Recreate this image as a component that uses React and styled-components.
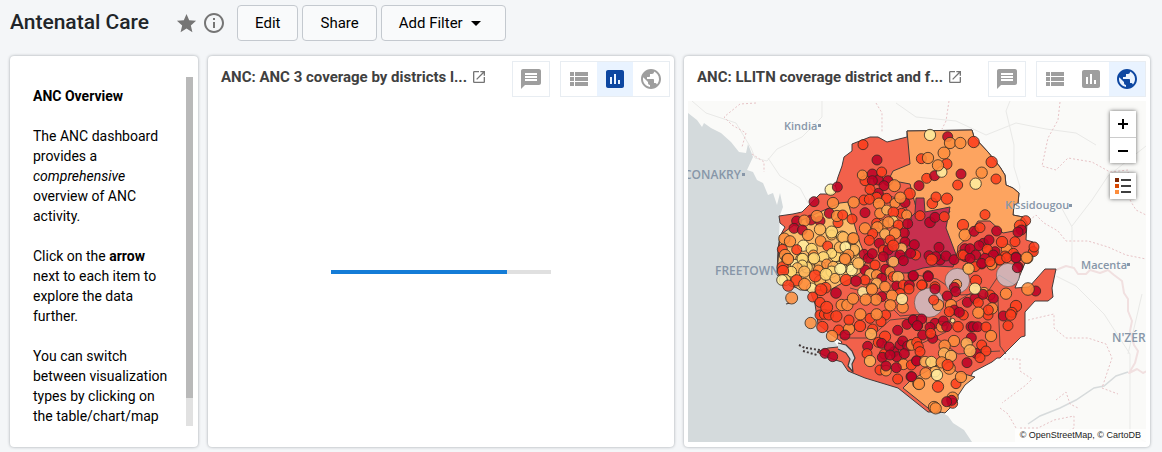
import React from "react";
import styled, { createGlobalStyle } from "styled-components";
import {
  MdStar,
  MdInfoOutline,
  MdMessage,
  MdViewList,
  MdAssessment,
  MdPublic,
  MdLaunch,
} from "react-icons/md";

const GlobalStyle = createGlobalStyle`
  * { box-sizing: border-box; }
  body {
    margin: 0;
    background: #f4f6f8;
    color: #000;
    font: 14px/20px Roboto, "Liberation Sans", sans-serif;
  }
  button { font: inherit; color: inherit; cursor: pointer; }
`;

const Page = styled.div`
  padding: 5px 12px 5px 10px;
`;

const Toolbar = styled.header`
  display: flex;
  align-items: center;
  gap: 4px;
  margin-bottom: 15px;
`;

const PageTitle = styled.h1`
  margin: 0 21px 2px 0;
  font-size: 21px;
  line-height: 24px;
  font-weight: 500;
  color: #212529;
`;

const IconButton = styled.button`
  display: flex;
  align-items: center;
  justify-content: center;
  width: 24px;
  height: 24px;
  padding: 0;
  border: 0;
  background: none;
  color: #757575;
`;

const Actions = styled.div`
  display: flex;
  gap: 4px;
  margin-left: 7px;
`;

const ActionButton = styled.button`
  display: flex;
  align-items: center;
  gap: 8px;
  height: 36px;
  padding: 0 ${(p) => (p.$menu ? 24 : 17)}px 0 17px;
  border: 1px solid #c4c9cf;
  border-radius: 4px;
  background: #f9fafb;
  font-size: 15px;
`;

const Dashboard = styled.main`
  display: grid;
  grid-template-columns: 188fr 466fr 466fr;
  gap: 10px;
`;

const Card = styled.section`
  display: flex;
  flex-direction: column;
  min-width: 0;
  padding: 4px;
  border-radius: 4px;
  background: #fff;
  box-shadow: 0 0 3px rgba(40, 50, 60, 0.42);
`;

const TextCard = styled(Card)`
  flex-direction: row;
  align-items: stretch;
  padding: 21px 5px 21px 23px;
`;

const TextBody = styled.div`
  flex: 1;
  min-width: 0;
  padding: 9px 12px 0 0;

  p { margin: 0 0 20px; }
  p:last-child { margin: 0; }
`;

const ScrollTrack = styled.div`
  flex: none;
  width: 7px;
  background: #e1e1e1;
`;

const ScrollThumb = styled.div`
  height: 92%;
  background: #b9b9b9;
`;

const CardHeader = styled.header`
  display: flex;
  align-items: flex-start;
  gap: 10px;
  padding: 1px 0 0 9px;
  height: 41px;
`;

const CardTitle = styled.h2`
  flex: 1;
  display: flex;
  align-items: center;
  gap: 4px;
  min-width: 0;
  margin: 6px 0 0;
  font-size: 15px;
  line-height: 20px;
  font-weight: 700;
  color: #404040;
  white-space: nowrap;

  svg { flex: none; color: #757575; }
`;

const IconGroup = styled.div`
  display: flex;
  border: 1px solid #e8edf2;
`;

const ViewButton = styled.button`
  display: flex;
  align-items: center;
  justify-content: center;
  width: 36px;
  height: 34px;
  padding: 0;
  border: 0;
  background: ${(p) => (p.$active ? "#e9f3ff" : "#fff")};
  color: ${(p) => (p.$active ? "#0d47a1" : "#9e9e9e")};
`;

const Loading = styled.div`
  flex: 1;
  display: flex;
  align-items: center;
  justify-content: center;
`;

const ProgressTrack = styled.div`
  width: 220px;
  height: 4px;
  background: #e0e0e0;
`;

const ProgressFill = styled.div`
  height: 100%;
  background: #147cd7;
`;

const MapFrame = styled.div`
  position: relative;
`;

const MapDrawing = styled.svg`
  display: block;
  width: 100%;
  height: auto;
`;

const MapControls = styled.div`
  position: absolute;
  top: 10px;
  right: 10px;
  display: flex;
  flex-direction: column;
  gap: 10px;
`;

const ControlBox = styled.div`
  background: #fff;
  box-shadow: 0 0 4px rgba(0, 0, 0, 0.6);
`;

const ControlButton = styled.button`
  display: flex;
  align-items: center;
  justify-content: center;
  width: 26px;
  height: 26px;
  padding: 0;
  border: 0;
  background: #fff;

  & + & { border-top: 1px solid #ccc; }
`;

const Attribution = styled.div`
  position: absolute;
  right: 0;
  bottom: 0;
  padding: 0 5px;
  background: rgba(255, 255, 255, 0.75);
  font: 9px/13px "Liberation Sans", sans-serif;
  color: #222;
`;

const PlaceName = styled.text`
  font: 600 ${(p) => (p.$city ? 12 : 11)}px "Open Sans", "Noto Sans", sans-serif;
  fill: #8796a8;
`;

const fills = {
  d: "#bd0026",
  r: "#fb3d1c",
  o: "#fd8d3c",
  l: "#fdb35a",
  y: "#fed976",
  p: "#ffeda0",
  g: "#c9c5cd",
};

/* Facilities grouped by map tile. Each entry: x, y, class and radius in
   thirds of a map unit, measured from the tile's corner. */
const tiles = [
  {
    x: 770,
    y: 120,
    points:
      "279,74,r 321,120,d 182,209,p,17 202,201,d 132,245,d 189,249,o,17 80,303,d 123,300,d 103,302,o,17 178,280,d 150,303,d 204,308,r 141,289,o,18 201,288,o,17 72,325,d 97,330,d 43,356,o,17 60,364,o,17 114,345,o,17 150,328,l,17 185,345,l 185,336,y,18 216,350,y,17 37,388,r 100,377,p,17 80,389,r 125,387,y,17 152,363,o,16 173,378,r 130,405,o 197,408,y,17 185,400,y 226,380,p,17 45,405,o,17 53,418,o,18 95,418,y,18 128,418,l,17 160,412,y,17 225,418,o,17 250,395,l,17 248,356,o,17 38,442,r,17 75,432,p,14 110,442,y,17 150,440,l,17 170,432,o 208,442,p,17 235,440,y,16 190,440,l,16",
  },
  {
    x: 840,
    y: 160,
    points:
      "75,62,r 67,45,o 97,42,d 115,60,d 125,36,r 97,62,d 144,62,d 163,77,o,18 132,77,d 115,100,d 90,88,r 110,112,r 72,120,r 88,118,r 140,115,r 165,130,o 117,131,o,17 195,128,d 209,101,r,17 181,113,o,17 75,158,d 41,127,o,17 8,165,r 36,177,r 120,160,o,16 140,150,l 185,160,r 200,165,o 160,157,r,16 110,190,r 75,205,o,17 130,195,o,16 160,183,y 145,187,o,17 175,195,r 112,202,o,17 203,191,d 98,221,r 135,222,l,16 193,219,d 165,220,o,17 88,241,r 150,240,r 118,250,d 195,246,d 185,265,l,16 223,254,d 130,270,r 145,270,d 160,257,r,17 72,283,d 85,295,d 97,281,d 227,285,r 180,285,d 212,280,d 130,290,d 160,305,l,16 190,302,d 75,330,d 105,315,r 137,328,d 90,342,l,16 110,345,o,16 150,335,o 125,355,d 160,350,r 174,352,l,18 18,360,r,17 75,360,r 48,363,d,16 110,370,l,16 95,385,o,16 135,380,o,16 170,378,d 190,375,r 208,375,d 219,349,d 264,347,d 247,375,r 285,380,r 240,167,r 270,187,d,16 285,172,d 313,170,r 277,130,r,16 288,111,r 321,116,r,17 237,77,d 260,55,r 284,47,d 320,12,r,16 305,36,p,16 294,16,o,17 363,42,d 353,75,r 297,262,d 267,287,d 300,300,d 287,290,d 318,288,d 275,299,r,17 342,299,d 369,195,r,17 375,225,o,18 375,266,d 365,285,r 376,290,d 385,325,o,16 0,262,l,17 10,232,l,17 40,235,o,17 42,270,l,17 16,261,p,16 25,285,o,17 17,300,o,17 35,330,p,17 5,325,p,16 55,310,l,17",
  },
  {
    x: 900,
    y: 120,
    points:
      "90,45,p,17 143,50,d 150,69,o,17 181,69,o,17 221,66,r,17 275,126,r,17 132,99,o,18 64,116,r 84,114,o,17 245,158,o,17 288,177,r 227,191,p,17 255,284,r 222,334,d 240,323,r 290,333,d 345,365,r 320,388,o,16 306,366,r,17 377,302,r 360,317,r,17 364,330,d 354,336,d 400,395,r 402,381,r 340,400,r 348,412,d,16 382,414,o,17 354,440,d 250,370,d 267,360,d 237,377,d 285,395,d 262,388,r 190,405,r 210,386,d 227,405,d 280,405,d 255,415,d 315,408,r 300,420,r 245,432,d 276,432,r,16 225,440,r",
  },
  {
    x: 770,
    y: 255,
    points:
      "54,12,o,17 98,12,y,17 132,10,y,17 225,12,o,17 97,30,y 82,38,l 64,50,y,16 39,48,r,17 45,75,y,17 36,75,p,16 80,76,r,17 55,92,r,17 125,99,p 103,50,l,17 150,78,l,17 104,88,o,18 145,45,o 185,50,y,17 136,63,r,18 168,58,y,18 195,70,l,15 211,42,p,17 65,129,o,18 128,126,r 167,98,r,16 153,104,r,18 198,114,d,16 150,142,r 150,180,r 163,178,r 176,180,r 170,157,r,18 199,184,r,17 122,204,o,17 157,216,r,17 206,225,r 186,243,o,17 237,222,o,17 225,240,d 237,195,r 215,150,o,17 232,150,o,17 249,131,o,17 278,110,p 335,125,d 318,134,o,17 306,103,o,17 287,134,o,17 390,115,r 417,102,r 366,122,o,17 361,151,o,17 398,157,o,17 396,132,p,17 300,190,r 347,180,r 333,200,r 271,178,o,17 320,178,o,17 308,222,r 270,213,r,17 303,237,l,17 345,245,r,17 383,226,d 411,208,d 430,195,d 443,212,d 293,274,d 291,296,r 300,318,l,17 325,262,r 335,265,d 343,297,r 337,307,d 372,290,d 390,270,d 398,258,d 358,276,d 380,305,d 425,268,o 413,273,d 403,296,d 360,300,d 330,345,r 348,347,o,16 348,333,d 400,328,o,16 379,338,d 383,372,r 424,330,r 440,317,d 423,365,d 445,385,o,17 165,295,d 188,305,d",
  },
  {
    x: 910,
    y: 255,
    points:
      "180,10,d 215,25,d 245,30,o 240,20,r 270,15,r 290,8,r 318,8,d 350,8,o,17 142,77,g,37 294,60,g,35 57,143,g,44 322,38,d 176,41,l,17 198,77,r,17 55,65,d 35,90,r 10,62,d 75,102,d 140,88,o 133,97,d 137,110,d 112,123,d 84,150,o,17 71,135,r 123,150,o,17 133,165,d 118,170,r 160,180,r 148,172,d 172,142,d 195,130,d 205,143,r 222,112,l 240,120,r 250,130,d 219,118,d 195,101,p,17 288,116,o,17 377,108,d 354,102,o,19 234,180,r 246,160,o,17 235,165,r 205,173,o,17 280,183,d 318,153,r,17 306,172,r 302,180,r,16 294,212,r 10,195,d 35,192,d 22,212,d 75,205,d 95,215,o,16 100,198,d 60,217,d 68,250,d 38,240,d 62,235,r 110,215,d 128,197,p,7 144,215,r,16 183,215,d 190,215,d 203,215,d 228,216,r 184,248,d 243,243,o,17 5,270,o,16 20,262,r 25,275,r 30,290,r 132,258,o,17 170,265,l,17 104,272,o,17 215,270,r 228,288,r 198,295,d 180,287,l,18 210,308,r 171,323,d 102,295,l,17 123,303,l,17 20,318,d 45,320,l,16 64,321,y,17 95,322,o,17 118,340,o,18 113,330,r,17 75,350,l,16 47,355,o,17 81,360,p,17 5,365,d 27,387,o,17 84,395,r,17 138,386,r 153,366,o,17 128,428,o,17 128,445,r 125,436,d 110,440,d 72,456,o,17 77,460,o,17",
  },
];

const parse = (points) =>
  points.split(" ").map((entry) => {
    const [x, y, kind, r] = entry.split(",");
    return { x: +x, y: +y, kind, r: r ? +r : 15 };
  });

function FacilityMap() {
  return (
    <MapDrawing viewBox="688 101 458 341" role="img" aria-label="LLITN coverage by district and facility">
      <rect x="688" y="101" width="458" height="341" fill="#fafaf8" />
      <path
        d="M688 113l9 7 5 7 2-4 7 5 10 5 10 9 8 10 7 1 2-9 2 5 3 8-6 13 6 2 4 8 6 3 5 12 5-2 4 12 3-12 3 14-3 8L779 237 820 280 825 330 853 365 905 388 935 409 948 416 953 423 964 430 972 442 688 442z"
        fill="#d4dadc"
      />
      <g fill="none" stroke="#e9e9e7">
        <path d="M692 101l14 12 30 10 15 25 4 10 12 3 10-12 25-12 20-20 0-16M768 158l12 18 20 12 8 15M896 103l20 14 40 4 30 14 30-12 30 6 30 4 20 12" />
        <path d="M1010 101l-4 10 8 34 0 22 6 20-4 18M1060 205l12 22 0 40M1072 226l20-26 16-24 38-30M1056 276l20 10 28 28 26 40 0 80 16 8M1128 354l14-60" />
      </g>
      <path
        d="M1028 424l12-8 20-8 16-8 18-12 10-2 12-10 12-4"
        fill="none"
        stroke="#d7dbdc"
        strokeWidth="1.5"
      />
      <g fill="none" stroke="#f1e0e0" strokeWidth="2" strokeLinejoin="round">
        <path d="M1056 270l10-4 8 2 4 6 8 0 4-4 10 3 8-3 6 5 8 6 2 12 4 6 0 12 4 10-2 10 4 14 4 6-3 12-6 10 8-4 6 4 4-2" />
      </g>
      <g fill="none" stroke="#e7c3c6" strokeDasharray="2 2">
        <path d="M756 103l-16 1-16 13 8 8 14 8-4 14M752 154l12 8 0 10M876 103l6 10 0 20M949 101l-3 20-4 8M1060 102l-2 18-10 18-6 28 14 4 12-12 24 4 18 10 18-2 2 30 6 10 20 10" />
        <path d="M1016 217l10 6 10-8 8 8 14 8 8 10 22 0 20 6 18 8 20 4M1028 320l26-6 0 14 12 10 22 0 18 6 6 14-10 30 16 6M1004 359l16 0 0 12 12 8-6 6-24 18M1000 408l8 6 8 14M1056 400l10-8 4 12 8 4M1020 428l18 0 16-8 20-4 0 12-12 6" />
      </g>

      <g stroke="#443b3b" strokeLinejoin="round">
        <path
          d="M852 144l18-7 8 0 9 5 20-5 0-6 65-1 2 7 14 15 12 15 5 8 1 10 7 3 6 5-1 10-4 2-1 10 10 2 4 6-1 17 7 2 4 11-12 10-5 12-5 13 14-1 8-9 8-9 11 0-4 19 1 9-5 4-13 0-10 11 0 24-4 1-21 21-3 0-5 4-19 10-3 6-10 7-8 12-7 11-5 5-5-1-7 0-30-24-33-10-17-7-6-9-10-3-15-7 11-4 10-1 4-5-12-8-12-10-3-20-5-13-20-5-13-12 1-25 2-13 5-9-5-4-1-7 14-2 9-2 18-18 13 0 5-17 4-11 2-9 8-6z"
          fill="#f2614b"
        />
        <path
          d="M907 131l65-1 2 7 14 15 12 15 5 8 1 10 7 3 6 5-1 10-4 2-1 10 10 2 4 6-2 6-22 4-13-12-12 0-11 17-9 8-1 10-4 7-8-30-2-10 7-12-10 0-12 5-10-1-5-19-3-12-16-3-4-4 3-6 17-7z"
          fill="#fda460"
        />
        <path
          d="M780 235l20-14 40-18 8-1 5 18 7 23 7 17-7 13-30 17-30 0-23-15z"
          fill="#fdbc6c"
        />
        <path
          d="M915 213l1-15 8 0 1 14 25-5-4 21 11 29-4 10-16-1-14 2-16 5-17 0-7-23 24-10 1-20z"
          fill="#c8304f"
        />
        <path
          d="M903 388l8-8 9-5 23-13 14 10 18 5-10 8-8 12-7 11-5 5-5-1-7 0z"
          fill="#fda460"
        />
        <path
          d="M907 273l30 6 24 16 26-2 12-18 16 10M850 288l30 8 20 20 22-2 12 22 24 18 25-2 17-1M998 300l2 46 6 8M840 338l30 0 20-18 36-4M862 170l10 20 30 10 10 20M976 290l-20 12-10 30-30 14"
          fill="none"
          strokeWidth="0.8"
        />
        <path
          d="M838 343l8 2 6 6 3 7-3 6 1 8-5-6 2-7-4-6-8-4M786 304l4-1"
          fill="#d4dadc"
          strokeWidth="1.2"
        />
        <path
          d="M799 345l6 3M803 351l14 4M806 348l14 2"
          fill="none"
          strokeWidth="2"
          strokeDasharray="2 2"
        />
      </g>

      <PlaceName x="784" y="130">Kindia</PlaceName>
      <PlaceName x="1005" y="209">Kissidougou</PlaceName>
      <PlaceName x="1081" y="269">Macenta</PlaceName>
      <PlaceName $city x="684" y="179">CONAKRY</PlaceName>
      <PlaceName $city x="715" y="275">FREETOWN</PlaceName>
      <PlaceName $city x="1112" y="342">N'ZÉR</PlaceName>
      <path d="M818 124h3v3h-3zM742 173h3v3h-3zM1069 204h3v3h-3zM1127 263h3v3h-3z" fill="#8796a8" />

      {tiles.map((tile) => (
        <g
          key={`${tile.x}-${tile.y}`}
          transform={`translate(${tile.x} ${tile.y}) scale(${1 / 3})`}
          stroke="#332a22"
          strokeOpacity="0.8"
          strokeWidth="3"
          fillOpacity="0.86"
        >
          {parse(tile.points).map((p, i) => (
            <circle
              key={i}
              cx={p.x}
              cy={p.y}
              r={p.r}
              fill={fills[p.kind]}
              fillOpacity={p.kind === "g" ? 0.8 : undefined}
              strokeOpacity={p.kind === "g" ? 0.45 : undefined}
            />
          ))}
        </g>
      ))}
    </MapDrawing>
  );
}

const views = [
  { id: "table", label: "Table", Icon: MdViewList },
  { id: "chart", label: "Chart", Icon: MdAssessment },
  { id: "map", label: "Map", Icon: MdPublic },
];

function ItemHeader({ title, active }) {
  return (
    <CardHeader>
      <CardTitle>
        {title}
        <MdLaunch size={16} />
      </CardTitle>
      <IconGroup>
        <ViewButton aria-label="Interpretations">
          <MdMessage size={24} />
        </ViewButton>
      </IconGroup>
      <IconGroup>
        {views.map(({ id, label, Icon }) => (
          <ViewButton key={id} aria-label={label} $active={id === active}>
            <Icon size={24} />
          </ViewButton>
        ))}
      </IconGroup>
    </CardHeader>
  );
}

export default function App() {
  return (
    <Page>
      <GlobalStyle />
      <Toolbar>
        <PageTitle>Antenatal Care</PageTitle>
        <IconButton aria-label="Starred">
          <MdStar size={23} />
        </IconButton>
        <IconButton aria-label="Details">
          <MdInfoOutline size={24} />
        </IconButton>
        <Actions>
          <ActionButton>Edit</ActionButton>
          <ActionButton>Share</ActionButton>
          <ActionButton $menu>
            Add Filter
            <svg width="10" height="5" viewBox="0 0 10 5" aria-hidden="true">
              <path d="M0 0h10L5 5z" />
            </svg>
          </ActionButton>
        </Actions>
      </Toolbar>
      <Dashboard>
        <TextCard>
          <TextBody>
            <p>
              <b>ANC Overview</b>
            </p>
            <p>
              The ANC dashboard provides a <em>comprehensive</em> overview of ANC activity.
            </p>
            <p>
              Click on the <b>arrow</b> next to each item to explore the data further.
            </p>
            <p>You can switch between visualization types by clicking on the table/chart/map</p>
          </TextBody>
          <ScrollTrack>
            <ScrollThumb />
          </ScrollTrack>
        </TextCard>
        <Card>
          <ItemHeader title="ANC: ANC 3 coverage by districts l..." active="chart" />
          <Loading>
            <ProgressTrack role="progressbar" aria-label="Loading chart" aria-valuenow={80}>
              <ProgressFill style={{ width: "80%" }} />
            </ProgressTrack>
          </Loading>
        </Card>
        <Card>
          <ItemHeader title="ANC: LLITN coverage district and f..." active="map" />
          <MapFrame>
            <FacilityMap />
            <MapControls>
              <ControlBox>
                <ControlButton aria-label="Zoom in">
                  <svg width="12" height="12" viewBox="0 0 12 12">
                    <path d="M6 1v10M1 6h10" stroke="#000" strokeWidth="2" />
                  </svg>
                </ControlButton>
                <ControlButton aria-label="Zoom out">
                  <svg width="12" height="12" viewBox="0 0 12 12">
                    <path d="M1 6h10" stroke="#000" strokeWidth="2" />
                  </svg>
                </ControlButton>
              </ControlBox>
              <ControlBox>
                <ControlButton aria-label="Legend">
                  <svg width="16" height="16" viewBox="0 0 16 16">
                    <path d="M0 0h4v4H0z" fill="#7f2704" />
                    <path d="M0 6h4v4H0z" fill="#d94801" />
                    <path d="M0 12h4v4H0z" fill="#fd8d3c" />
                    <path d="M6 2h10M6 8h10M6 14h10" stroke="#000" strokeWidth="1.4" />
                  </svg>
                </ControlButton>
              </ControlBox>
            </MapControls>
            <Attribution>© OpenStreetMap, © CartoDB</Attribution>
          </MapFrame>
        </Card>
      </Dashboard>
    </Page>
  );
}
